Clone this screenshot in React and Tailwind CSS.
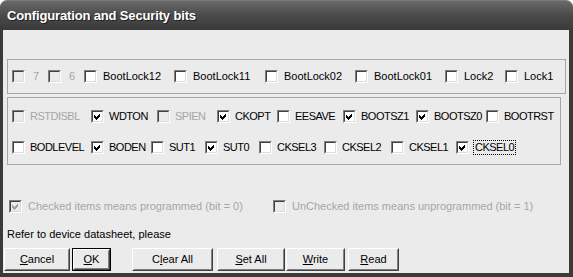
import React from 'react';

const Check = ({ checked, disabled }) => (
  <span className="inline-block w-[13px] h-[13px] shrink-0 border border-t-[#808080] border-l-[#808080] border-b-white border-r-white">
    <span
      className={
        disabled
          ? 'relative block w-full h-full border border-t-[#404040] border-l-[#404040] border-b-[#dcdcdc] border-r-[#dcdcdc] bg-[#ebebeb]'
          : 'relative block w-full h-full border border-t-[#404040] border-l-[#404040] border-b-[#dcdcdc] border-r-[#dcdcdc] bg-white'
      }
    >
      {checked && (
        <svg className="absolute left-0 top-0" width="9" height="9" viewBox="0 0 9 9">
          <path d="M1 3 L3 5 L7 1 L7 4 L3 8 L1 6 Z" fill={disabled ? '#a0a0a0' : '#000'} shapeRendering="crispEdges" />
        </svg>
      )}
    </span>
  </span>
);

const Item = ({ label, w, checked, disabled, gap = 'ml-[6px]', focus, narrow }) => (
  <div className={`flex items-center shrink-0 ${w}`}>
    <Check checked={checked} disabled={disabled} />
    <span
      className={`${gap} whitespace-nowrap leading-[13px] ${narrow ? 'tracking-[-0.5px]' : ''} ${
        disabled ? 'text-[#a6a6a6]' : 'text-black'
      } ${focus ? 'outline outline-1 outline-dotted outline-black outline-offset-0 px-[1px]' : ''}`}
    >
      {label}
    </span>
  </div>
);

const Btn = ({ w, def, children }) => (
  <div className={def ? `h-[23px] border border-black ${w}` : `h-[23px] ${w}`}>
    <div className="h-full border border-t-white border-l-white border-b-[#404040] border-r-[#404040]">
      <div className="h-full flex items-center justify-center border border-t-[#ebebeb] border-l-[#ebebeb] border-b-[#808080] border-r-[#808080] text-[11px] text-black [&_u]:underline-offset-1">
        {children}
      </div>
    </div>
  </div>
);

const row1 = [
  { label: '7', w: 'w-[36px]', disabled: true, gap: 'ml-[8px]' },
  { label: '6', w: 'w-[36px]', disabled: true, gap: 'ml-[8px]' },
  { label: 'BootLock12', w: 'w-[90px]' },
  { label: 'BootLock11', w: 'w-[91px]' },
  { label: 'BootLock02', w: 'w-[90px]' },
  { label: 'BootLock01', w: 'w-[90px]' },
  { label: 'Lock2', w: 'w-[60px]' },
  { label: 'Lock1', w: 'w-[50px]' },
];

const row2 = [
  { label: 'RSTDISBL', w: 'w-[79px]', disabled: true },
  { label: 'WDTON', w: 'w-[66px]', checked: true },
  { label: 'SPIEN', w: 'w-[60px]', disabled: true },
  { label: 'CKOPT', w: 'w-[60px]', checked: true },
  { label: 'EESAVE', w: 'w-[66px]' },
  { label: 'BOOTSZ1', w: 'w-[73px]', checked: true },
  { label: 'BOOTSZ0', w: 'w-[70px]', checked: true },
  { label: 'BOOTRST', w: 'w-[66px]' },
];

const row3 = [
  { label: 'BODLEVEL', w: 'w-[79px]' },
  { label: 'BODEN', w: 'w-[60px]', checked: true },
  { label: 'SUT1', w: 'w-[54px]' },
  { label: 'SUT0', w: 'w-[54px]', checked: true },
  { label: 'CKSEL3', w: 'w-[65px]' },
  { label: 'CKSEL2', w: 'w-[67px]' },
  { label: 'CKSEL1', w: 'w-[65px]' },
  { label: 'CKSEL0', w: 'w-[60px]', checked: true, focus: true },
];

export default function App() {
  return (
    <div className="w-[573px] h-[277px] bg-white font-['Liberation_Sans',Arial,sans-serif] text-[11px] overflow-hidden">
      {/* title bar */}
      <div className="h-[30px] rounded-t-[7px] bg-gradient-to-b from-[#6a6a6a] via-[#4a4a4a] to-[#3a3a3a] border-t border-[#7a7a7a] flex items-center pl-[7px]">
        <span className="text-white font-bold text-[13px] tracking-[-0.15px] [text-shadow:1px_1px_0_#222]">
          Configuration and Security bits
        </span>
      </div>

      {/* body */}
      <div className="h-[247px] bg-[#ebebeb] border-l-[3px] border-r-[4px] border-b-[4px] border-[#3a3a3a] flex flex-col">
        <div className="ml-[4px] mt-[29px] w-[559px] h-[35px] border border-[#a6a6a6] flex items-center pl-[4px]">
          {row1.map(it => (
            <Item key={it.label} {...it} />
          ))}
        </div>

        <div className="ml-[4px] mt-[3px] w-[554px] h-[68px] border border-[#a6a6a6] flex flex-col pl-[4px] pt-[12px] gap-[18px]">
          <div className="flex items-center h-[13px]">
            {row2.map(it => (
              <Item key={it.label} {...it} gap="ml-[5px]" narrow />
            ))}
          </div>
          <div className="flex items-center h-[13px]">
            {row3.map(it => (
              <Item key={it.label} {...it} gap="ml-[5px]" narrow />
            ))}
          </div>
        </div>

        <div className="mt-[35px] h-[13px] flex items-center pl-[6px]">
          <Item label="Checked items means programmed (bit = 0)" w="w-[264px]" checked disabled />
          <Item label="UnChecked items means unprogrammed (bit = 1)" w="w-[280px]" disabled />
        </div>

        <div className="mt-[15px] h-[13px] leading-[13px] pl-[4px] text-black">Refer to device datasheet, please</div>

        <div className="mt-[7px] flex items-start">
          <Btn w="ml-[1px] w-[66px]"><span><u>C</u>ancel</span></Btn>
          <Btn w="ml-[2px] w-[39px]" def><span><u>O</u>K</span></Btn>
          <Btn w="ml-[21px] w-[81px]"><span>C<u>l</u>ear All</span></Btn>
          <Btn w="ml-[4px] w-[68px]"><span><u>S</u>et All</span></Btn>
          <Btn w="ml-[1px] w-[59px]"><span><u>W</u>rite</span></Btn>
          <Btn w="ml-[3px] w-[51px]"><span><u>R</u>ead</span></Btn>
        </div>
      </div>
    </div>
  );
}
